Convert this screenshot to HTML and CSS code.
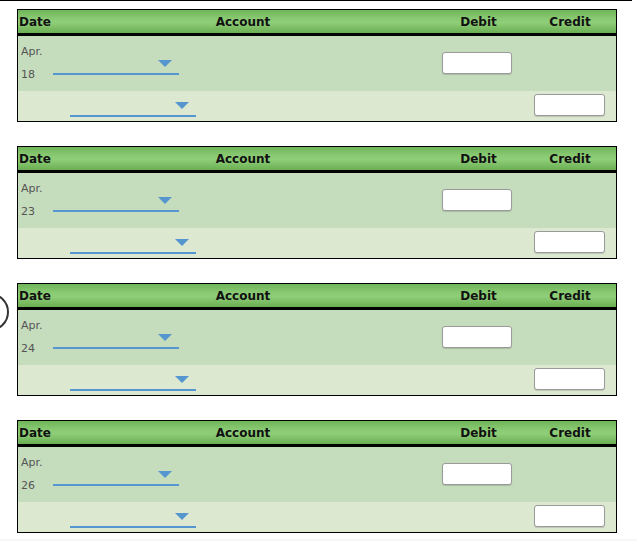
FILE: index.html
```html
<!DOCTYPE html>
<html>
<head>
<meta charset="utf-8">
<link rel="stylesheet" href="styles.css">
</head>
<body>
<div class="page">
  <svg class="badge" width="30" height="44" viewBox="0 0 30 44"><circle cx="-10" cy="22" r="18" fill="none" stroke="#333" stroke-width="2"/></svg>

  <div class="journal">
    <div class="hdr"><div class="c-date">Date</div><div class="c-acc">Account</div><div class="c-num">Debit</div><div class="c-num">Credit</div></div>
    <div class="row r1"><div class="c-date date-txt"><div>Apr.</div><div>18</div></div><div class="c-acc"><div class="select"><span class="tri"></span></div></div><div class="c-num"><input class="amt" type="text"></div><div class="c-num"></div></div>
    <div class="row r2"><div class="c-date"></div><div class="c-acc indent"><div class="select"><span class="tri"></span></div></div><div class="c-num"></div><div class="c-num"><input class="amt" type="text"></div></div>
  </div>

  <div class="journal">
    <div class="hdr"><div class="c-date">Date</div><div class="c-acc">Account</div><div class="c-num">Debit</div><div class="c-num">Credit</div></div>
    <div class="row r1"><div class="c-date date-txt"><div>Apr.</div><div>23</div></div><div class="c-acc"><div class="select"><span class="tri"></span></div></div><div class="c-num"><input class="amt" type="text"></div><div class="c-num"></div></div>
    <div class="row r2"><div class="c-date"></div><div class="c-acc indent"><div class="select"><span class="tri"></span></div></div><div class="c-num"></div><div class="c-num"><input class="amt" type="text"></div></div>
  </div>

  <div class="journal">
    <div class="hdr"><div class="c-date">Date</div><div class="c-acc">Account</div><div class="c-num">Debit</div><div class="c-num">Credit</div></div>
    <div class="row r1"><div class="c-date date-txt"><div>Apr.</div><div>24</div></div><div class="c-acc"><div class="select"><span class="tri"></span></div></div><div class="c-num"><input class="amt" type="text"></div><div class="c-num"></div></div>
    <div class="row r2"><div class="c-date"></div><div class="c-acc indent"><div class="select"><span class="tri"></span></div></div><div class="c-num"></div><div class="c-num"><input class="amt" type="text"></div></div>
  </div>

  <div class="journal">
    <div class="hdr"><div class="c-date">Date</div><div class="c-acc">Account</div><div class="c-num">Debit</div><div class="c-num">Credit</div></div>
    <div class="row r1"><div class="c-date date-txt"><div>Apr.</div><div>26</div></div><div class="c-acc"><div class="select"><span class="tri"></span></div></div><div class="c-num"><input class="amt" type="text"></div><div class="c-num"></div></div>
    <div class="row r2"><div class="c-date"></div><div class="c-acc indent"><div class="select"><span class="tri"></span></div></div><div class="c-num"></div><div class="c-num"><input class="amt" type="text"></div></div>
  </div>
</div>
<div class="foot"></div>
</body>
</html>
```

FILE: styles.css
```css
html, body {
  margin: 0;
  padding: 0;
  background: #fff;
}
body {
  font-family: "DejaVu Sans", Verdana, sans-serif;
}
.page {
  position: relative;
  width: 632px;
  border-top: 1px solid #000;
  padding-top: 8px;
  padding-bottom: 6px;
  display: flex;
  flex-direction: column;
  gap: 24px;
}
.badge {
  position: absolute;
  left: 0;
  top: 289px;
}
.journal {
  margin-left: 17px;
  width: 598px;
  border: 1px solid #000;
}
.hdr, .row {
  display: grid;
  grid-template-columns: 34px 381px 91px 92px;
}
.hdr {
  height: 23px;
  box-sizing: border-box;
  padding-top: 1px;
  line-height: 22px;
  font-size: 12px;
  font-weight: bold;
  color: #111;
  background: linear-gradient(to bottom, #6fb559 0%, #8bcb74 40%, #8fce78 55%, #6aae52 100%);
  border-bottom: 0;
  box-shadow: none;
  white-space: nowrap;
}
.hdr + .row {
  border-top: 3px solid #000;
}
.hdr .c-date {
  padding-left: 1px;
}
.hdr .c-acc, .hdr .c-num {
  text-align: center;
}
.r1 {
  height: 55px;
  background: #c5dcbd;
}
.r2 {
  height: 30px;
  background: #dde8d1;
}
.date-txt {
  padding: 4px 0 0 3px;
  font-size: 11px;
  line-height: 23px;
  color: #555;
}
.c-acc {
  padding-left: 1px;
}
.r1 .c-acc {
  padding-top: 24px;
}
.r2 .c-acc {
  padding-top: 11px;
}
.c-acc.indent {
  padding-left: 18px;
}
.select {
  width: 119px;
  height: 13px;
  border-bottom: 2px solid #5596cf;
  display: flex;
  justify-content: flex-end;
  align-items: flex-start;
  padding-right: 7px;
  box-sizing: content-box;
}
.tri {
  width: 0;
  height: 0;
  border-left: 7px solid transparent;
  border-right: 7px solid transparent;
  border-top: 7px solid #5596cf;
}
.c-num {
  display: flex;
  justify-content: center;
  align-items: flex-start;
}
.r1 .c-num {
  padding-top: 16px;
}
.r2 .c-num {
  padding-top: 3px;
}
.amt {
  width: 70px;
  height: 22px;
  box-sizing: border-box;
  margin: 0;
  padding: 0;
  border: 1px solid #9a9a9a;
  border-radius: 3px;
  background: #fff;
  box-shadow: 0 1px 1px rgba(0,0,0,0.15);
}
.r1 .amt {
  margin-left: -3px;
}
.r2 .amt {
  width: 71px;
  margin-left: -2px;
}
.foot {
  height: 3px;
  background: #f6f6f6;
}
```
